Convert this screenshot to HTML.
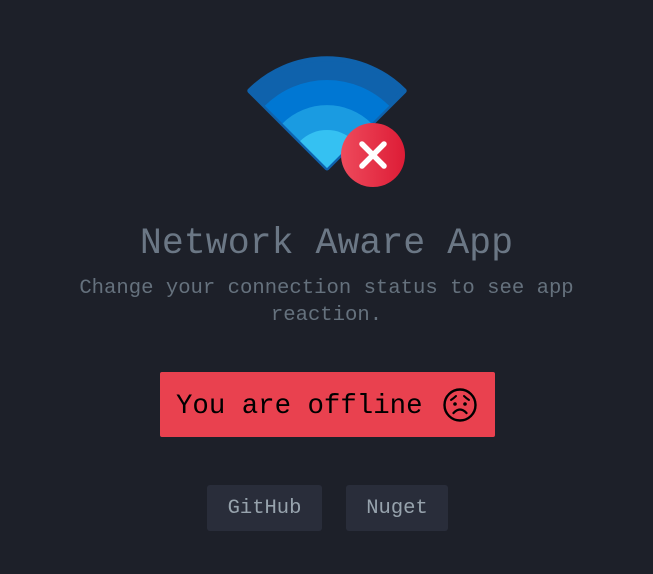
<!DOCTYPE html>
<html><head><meta charset="utf-8"><style>
html,body{margin:0;padding:0;background:#1d2029;width:653px;height:574px;overflow:hidden;position:relative;font-family:"Liberation Mono",monospace}
.t{position:absolute;left:0;width:653px;text-align:center;white-space:nowrap}
#title{top:222px;font-size:36.6px;color:#6b7785;line-height:44px}
#sub{top:275px;font-size:20.6px;color:#65717d;line-height:27px;white-space:normal;left:70px;width:513px}
#off{position:absolute;left:160px;top:372px;width:335px;height:65px;background:#e9414f;border-radius:2px}
.b{position:absolute;top:485px;height:46px;background:#292d3a;border-radius:3px;color:#97a3ad;font-size:20.5px;line-height:48px;text-align:center}
</style></head><body>
<svg width="653" height="574" style="position:absolute;left:0;top:0">
<defs><linearGradient id="g" x1="0" x2="1"><stop offset="0" stop-color="#ee4a5c"/><stop offset="1" stop-color="#dd1c36"/></linearGradient></defs>
<g stroke-linejoin="round">
<path d="M327 168 L249.8 90.8 A109 109 0 0 1 404.2 90.8 Z" fill="#0f62ac" stroke="#0f62ac" stroke-width="5"/>
<path d="M327 168 L264.8 105.8 A88 88 0 0 1 389.2 105.8 Z" fill="#0077d3"/>
<path d="M327 168 L282.5 123.5 A63 63 0 0 1 371.5 123.5 Z" fill="#1a9be1"/>
<path d="M327 168 L300.1 141.1 A38 38 0 0 1 353.9 141.1 Z" fill="#35c1f2"/>
</g>
<circle cx="373" cy="155" r="32" fill="url(#g)"/>
<path d="M362 144 L384 166 M384 144 L362 166" stroke="#fff" stroke-width="5.5" stroke-linecap="round"/>
</svg>
<div class="t" id="title">Network Aware App</div>
<div class="t" id="sub">Change your connection status to see app reaction.</div>
<div id="off"></div>
<div class="t" style="left:176px;top:389px;width:auto;font-size:27.4px;line-height:36px;color:#000">You are offline</div>
<svg width="40" height="40" style="position:absolute;left:440px;top:385px" viewBox="0 0 40 40">
<circle cx="20" cy="20" r="15.5" fill="none" stroke="#000" stroke-width="2.4"/>
<path d="M11 15 Q14 13 16 11 M29 15 Q26 13 24 11" stroke="#000" stroke-width="2" fill="none" stroke-linecap="round"/>
<circle cx="15" cy="19" r="1.8"/><circle cx="25" cy="19" r="1.8"/>
<path d="M13.5 28 Q20 21 26.5 28" stroke="#000" stroke-width="2.3" fill="none" stroke-linecap="round"/>
</svg>
<div class="b" style="left:207px;width:115px">GitHub</div>
<div class="b" style="left:346px;width:102px">Nuget</div>
</body></html>
